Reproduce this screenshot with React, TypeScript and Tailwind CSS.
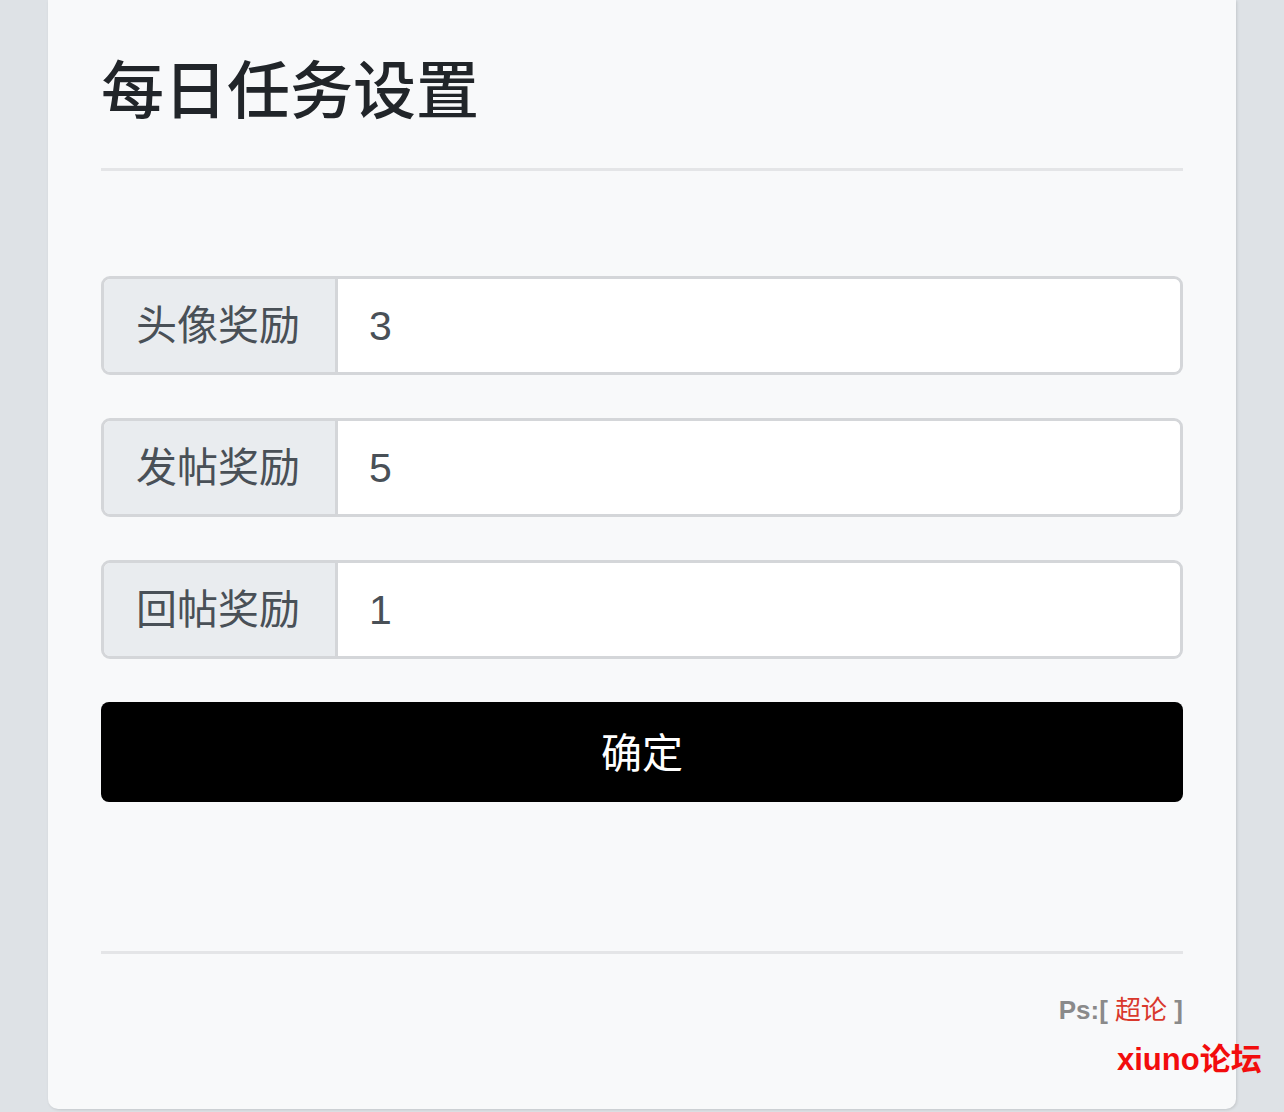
import React from "react";

const font = { fontFamily: '"Helvetica Neue", "Liberation Sans", "Noto Sans CJK SC", sans-serif' };

function Row({ label, value }: { label: string; value: string }) {
  return (
    <div className="flex h-[99px] rounded-[9px] border-[3px] border-[#d4d6d9] overflow-hidden">
      <div className="w-[234px] shrink-0 bg-[#e9ecef] border-r-[3px] border-[#d4d6d9] flex items-center pl-[32px] pt-[3px] text-[41px] text-[#495057]">
        {label}
      </div>
      <div className="flex-1 bg-white flex items-center pl-[31px] pt-[3px] text-[41px] text-[#495057]">{value}</div>
    </div>
  );
}

export default function App() {
  return (
    <div className="relative w-[1284px] h-[1112px] bg-[#dee2e6] overflow-hidden" style={font}>
      <div className="ml-[48px] w-[1188px] h-[1109px] bg-[#f8f9fa] rounded-b-[10px] shadow-[1px_1px_3px_rgba(0,0,0,0.12)] px-[53px] flex flex-col">
        <h1 className="mt-[52px] text-[63px] leading-[78px] font-medium text-[#212529]">每日任务设置</h1>
        <div className="mt-[38px] h-[3px] bg-[#e4e5e7]" />
        <div className="mt-[105px] flex flex-col gap-[43px]">
          <Row label="头像奖励" value="3" />
          <Row label="发帖奖励" value="5" />
          <Row label="回帖奖励" value="1" />
        </div>
        <button className="mt-[43px] h-[100px] w-full bg-black rounded-[8px] text-white text-[41px] pt-[6px]">确定</button>
        <div className="mt-[149px] h-[3px] bg-[#e4e5e7]" />
        <div className="mt-[40px] text-right text-[26px] font-bold text-[#8a8a8a] leading-[32px]">
          Ps:[ <span className="text-[#d9382c] font-normal">超论</span> ]
        </div>
      </div>
      <div className="absolute left-[1117px] top-[1040px] text-[31px] font-bold text-[#f20d0d] leading-[40px]">xiuno论坛</div>
    </div>
  );
}
